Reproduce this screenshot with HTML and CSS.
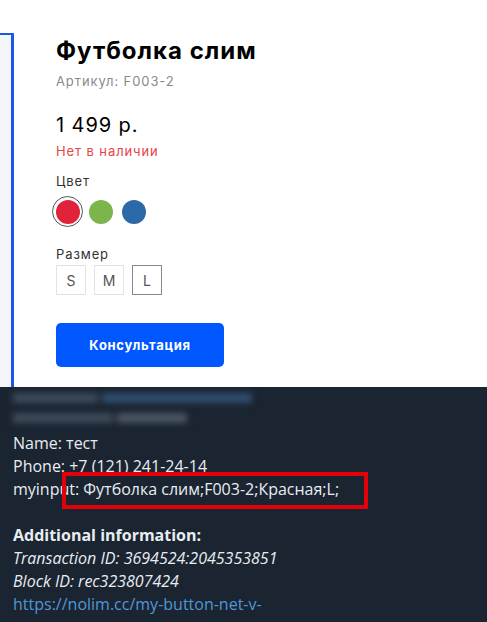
FILE: index.html
```html
<!DOCTYPE html>
<html lang="ru">
<head>
    <meta charset="UTF-8">
    <meta name="viewport" content="width=device-width, initial-scale=1.0">
    <title>Футболка слим</title>
    <link rel="stylesheet" href="styles.css">
</head>
<body>
    <!-- Карточка товара -->
    <section class="shop">
        <div class="gallery"></div>
        <div class="product">
            <h1 class="title">Футболка слим</h1>
            <div class="sku">Артикул: F003-2</div>
            <div class="price">1 499 р.</div>
            <div class="stock">Нет в наличии</div>

            <div class="label">Цвет</div>
            <div class="colors">
                <span class="swatch active"><span class="dot red"></span></span>
                <span class="swatch"><span class="dot green"></span></span>
                <span class="swatch"><span class="dot blue"></span></span>
            </div>

            <div class="label size-label">Размер</div>
            <div class="sizes">
                <span class="size">S</span>
                <span class="size">M</span>
                <span class="size active">L</span>
            </div>

            <button class="btn">Консультация</button>
        </div>
    </section>

    <!-- Сообщение с заявкой -->
    <section class="message">
        <div class="blur">
            <span class="blot b1"></span>
            <span class="blot b2"></span>
        </div>
        <div class="blur second">
            <span class="blot b3"></span>
            <span class="blot b4"></span>
        </div>
        <p class="line first">Name: тест</p>
        <p class="line">Phone: +7 (121) 241-24-14</p>
        <p class="line mark">myinput: Футболка слим;F003-2;Красная;L;<span class="frame"></span></p>
        <p class="line gap"><b>Additional information:</b></p>
        <p class="line"><i>Transaction ID: 3694524:2045353851</i></p>
        <p class="line"><i>Block ID: rec323807424</i></p>
        <p class="line"><a href="#">https://nolim.cc/my-button-net-v-</a></p>
    </section>
</body>
</html>
```

FILE: styles.css
```css
body {
    margin: 0;
    width: 487px;
    height: 622px;
    overflow: hidden;
    background-color: #1b2431;
}
.shop {
    display: flex;
    height: 387px;
    background-color: #fff;
    font-family: Inter, "Noto Sans", sans-serif;
    letter-spacing: 0.9px;
}
.gallery {
    width: 11px;
    margin-top: 33px;
    background-color: #f4f5f7;
    border-top: 2px solid #1a58e6;
    border-right: 3px solid #1a58e6;
}
.product {
    padding: 36px 0 0 42px;
}
.title {
    margin: 0;
    font-size: 24px;
    font-weight: 700;
    line-height: 30px;
    color: #000;
    letter-spacing: 1px;
}
.sku {
    margin-top: 7px;
    font-size: 13px;
    color: #8a8a8a;
}
.price {
    margin-top: 24px;
    font-size: 20px;
    color: #000;
}
.stock {
    margin-top: 6px;
    font-size: 13px;
    color: #e84444;
}
.label {
    margin-top: 14px;
    font-size: 13px;
    color: #333;
}
.size-label {
    margin-top: 19px;
}
.colors {
    display: flex;
    gap: 2px;
    margin: 7px 0 0 -4px;
}
.swatch {
    display: flex;
    align-items: center;
    justify-content: center;
    width: 29px;
    height: 29px;
    border: 1px solid transparent;
    border-radius: 50%;
}
.swatch.active {
    border-color: #555;
}
.dot {
    width: 24px;
    height: 24px;
    border-radius: 50%;
}
.red { background-color: #e0233b; }
.green { background-color: #7bb54b; }
.blue { background-color: #2b6aa6; }
.sizes {
    display: flex;
    gap: 8px;
    margin-top: 3px;
}
.size {
    display: flex;
    align-items: center;
    justify-content: center;
    width: 28px;
    height: 28px;
    border: 1px solid #e2e2e2;
    font-size: 14px;
    letter-spacing: 0;
    color: #555;
}
.size.active {
    border-color: #888;
}
.btn {
    display: block;
    width: 168px;
    height: 44px;
    margin-top: 28px;
    border: none;
    border-radius: 5px;
    background-color: #0057ff;
    color: #fff;
    font-family: Inter, "Noto Sans", sans-serif;
    font-size: 13px;
    font-weight: 700;
    letter-spacing: 0.7px;
}
.message {
    padding: 4px 13px 0;
    font-family: "Open Sans", "Noto Sans", sans-serif;
    font-size: 16px;
    color: #e8edf2;
}
.blur {
    display: flex;
    gap: 4px;
    height: 14px;
    filter: blur(3px);
}
.blur.second {
    margin-top: 6px;
}
.blot {
    height: 10px;
    margin-top: 2px;
    background-color: #3b4a5c;
}
.b1 { width: 85px; }
.b2 { width: 150px; background-color: #2f4e6e; }
.b3 { width: 100px; background-color: #3e4b5a; }
.b4 { width: 70px; background-color: #4a5563; }
.line {
    margin: 0;
    line-height: 23px;
}
.line.first {
    margin-top: 7px;
}
.line.gap {
    margin-top: 23px;
}
.mark {
    position: relative;
}
.frame {
    position: absolute;
    left: 49px;
    top: -6px;
    width: 298px;
    height: 29px;
    border: 4px solid #e3000b;
}
.message a {
    color: #4f98d8;
    text-decoration: none;
}
```
